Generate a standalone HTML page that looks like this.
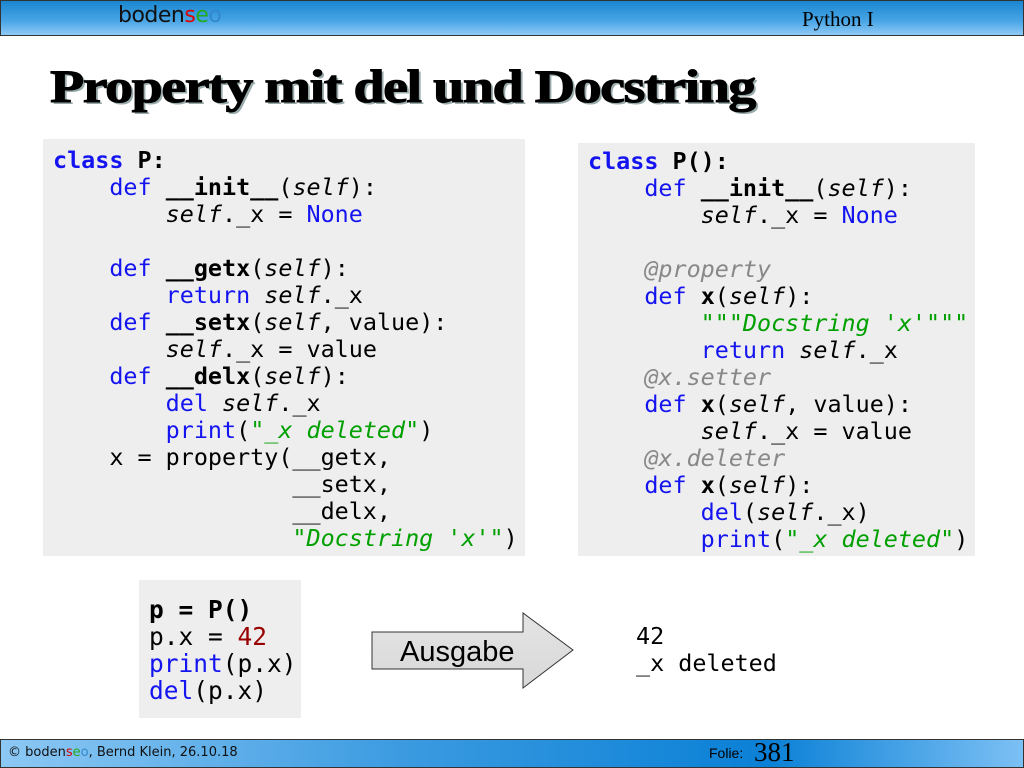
<!DOCTYPE html>
<html><head><meta charset="utf-8"><style>
body{margin:0;width:1024px;height:768px;position:relative;background:#fff;overflow:hidden;font-family:"Liberation Sans",sans-serif}
.hdr{position:absolute;left:0;top:0;width:1022px;height:34px;border:1px solid #333;background:linear-gradient(180deg,#1a86d0 0%,#4aa6e6 60%,#8fcaf6 100%)}
.ftr{position:absolute;left:0;top:739px;width:1022px;height:27px;border:1px solid #333;background:linear-gradient(90deg,#8cc8f4 0%,#3a9ae0 40%,#0a80d6 75%,#7cc0f4 100%)}
.logo{position:absolute;font-family:"DejaVu Sans",sans-serif;color:#111}
.t{position:absolute;left:50px;top:60px;font-family:"Liberation Serif",serif;font-weight:bold;font-size:47px;letter-spacing:-1.2px;color:#000;text-shadow:2px 2px 0 #9aa;-webkit-text-stroke:1px #000;transform:scaleX(1.19);transform-origin:0 0;white-space:nowrap}
.box{position:absolute;background:#eeeeee}
pre{position:absolute;margin:0;font-family:"DejaVu Sans Mono",monospace;font-size:23.4px;line-height:27px;color:#000}
.k{color:#1414f0}.b{font-weight:bold}.i{font-style:italic}.s{color:#00a000;font-style:italic}.d{color:#888;font-style:italic}.n{color:#900}
</style></head><body>
<div class="hdr"></div>
<div class="logo" style="left:118px;top:3px;font-size:22px;letter-spacing:-0.5px">boden<span style="color:#d00">s</span><span style="color:#2a2">e</span><span style="color:#38c">o</span></div>
<div style="position:absolute;left:802px;top:7px;font-family:'Liberation Serif',serif;font-size:21px;color:#000">Python I</div>
<div class="t">Property mit del und Docstring</div>

<div class="box" style="left:43px;top:139px;width:482px;height:417px"></div>
<pre style="left:53px;top:147px"><span class="k b">class</span> <span class="b">P:</span>
    <span class="k">def</span> <span class="b">__init__</span>(<span class="i">self</span>):
        <span class="i">self</span>._x = <span class="k">None</span>

    <span class="k">def</span> <span class="b">__getx</span>(<span class="i">self</span>):
        <span class="k">return</span> <span class="i">self</span>._x
    <span class="k">def</span> <span class="b">__setx</span>(<span class="i">self</span>, value):
        <span class="i">self</span>._x = value
    <span class="k">def</span> <span class="b">__delx</span>(<span class="i">self</span>):
        <span class="k">del</span> <span class="i">self</span>._x
        <span class="k">print</span>(<span class="s">"_x deleted"</span>)
    x = property(__getx,
                 __setx,
                 __delx,
                 <span class="s">"Docstring 'x'"</span>)</pre>

<div class="box" style="left:578px;top:143px;width:397px;height:413px"></div>
<pre style="left:588px;top:148px"><span class="k b">class</span> <span class="b">P():</span>
    <span class="k">def</span> <span class="b">__init__</span>(<span class="i">self</span>):
        <span class="i">self</span>._x = <span class="k">None</span>

    <span class="d">@property</span>
    <span class="k">def</span> <span class="b">x</span>(<span class="i">self</span>):
        <span class="s">"""Docstring 'x'"""</span>
        <span class="k">return</span> <span class="i">self</span>._x
    <span class="d">@x.setter</span>
    <span class="k">def</span> <span class="b">x</span>(<span class="i">self</span>, value):
        <span class="i">self</span>._x = value
    <span class="d">@x.deleter</span>
    <span class="k">def</span> <span class="b">x</span>(<span class="i">self</span>):
        <span class="k">del</span>(<span class="i">self</span>._x)
        <span class="k">print</span>(<span class="s">"_x deleted"</span>)</pre>

<div class="box" style="left:139px;top:580px;width:162px;height:138px"></div>
<pre style="left:149px;top:596px;font-size:24.5px"><span class="b">p = P()</span>
p.x = <span class="n">42</span>
<span class="k">print</span>(p.x)
<span class="k">del</span>(p.x)</pre>

<svg style="position:absolute;left:0;top:0" width="1024" height="768">
<defs><linearGradient id="g" x1="0" y1="0" x2="0" y2="1"><stop offset="0" stop-color="#e4e4e4"/><stop offset="1" stop-color="#d8d8d8"/></linearGradient></defs>
<polygon points="372,632 523,632 523,613 573,650 523,688 523,669 372,669" fill="url(#g)" stroke="#333" stroke-width="1"/>
<text x="400" y="661" font-family="Liberation Sans, sans-serif" font-size="29" fill="#000">Ausgabe</text>
</svg>

<pre style="left:636px;top:623px">42
_x deleted</pre>

<div class="ftr"></div>
<div class="logo" style="left:8px;top:745px;font-size:13px">© boden<span style="color:#d00">s</span><span style="color:#2a2">e</span><span style="color:#38c">o</span>, Bernd Klein, 26.10.18</div>
<div style="position:absolute;left:709px;top:745px;font-size:14px;color:#000">Folie:</div>
<div style="position:absolute;left:754px;top:737px;font-family:'Liberation Serif',serif;font-size:27px;color:#000">381</div>
</body></html>
